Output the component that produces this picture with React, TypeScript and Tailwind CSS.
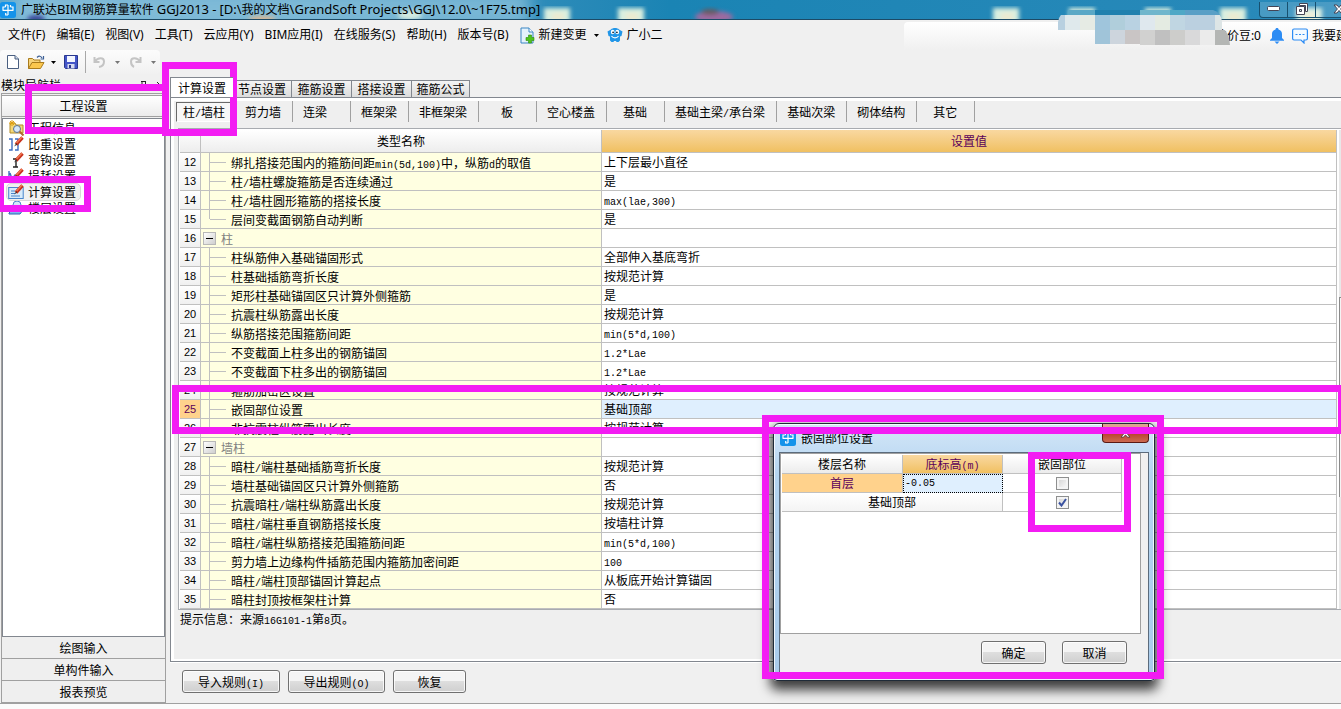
import type { ReactNode } from "react";

const UI = "font-['Noto_Sans','Noto_Sans_CJK_SC',sans-serif]";
const SONG = "font-['Noto_Sans_CJK_SC',sans-serif]";

/** Half-width characters take half the advance of a Chinese character. */
function Mixed({ text, latin = "font-['Liberation_Mono',monospace] text-[10px] leading-none" }: { text: string; latin?: string }) {
  return (
    <>
      {text.split(/([\x21-\x7e]+)/).map((part, i) =>
        i % 2 ? (
          <span key={i} className={latin}>
            {part}
          </span>
        ) : (
          part
        ),
      )}
    </>
  );
}

function AppIcon() {
  return (
    <svg width="16" height="16" viewBox="0 0 16 16" aria-hidden="true" className="shrink-0">
      <rect width="16" height="16" rx="2.5" fill="#1493ea" />
      <path
        d="M8 3v10M2.500 8.300h11M5.500 5V3H8M10.500 5V3M5.500 5H3v3M10.500 5H13v3M5.700 11v2H8"
        fill="none"
        stroke="#fff"
        strokeWidth="1.2"
      />
    </svg>
  );
}

function Caret({ color = "#000" }: { color?: string }) {
  return (
    <svg width="5" height="3" viewBox="0 0 5 3" aria-hidden="true">
      <path d="M0 0h5L2.5 3z" fill={color} />
    </svg>
  );
}

function TitleBar() {
  const spots = [544, 618, 993, 1069, 1145, 1220, 1296];
  return (
    <header className="relative flex h-5 items-center overflow-hidden border-b border-[#1c4a66] bg-linear-to-r from-[#62a9cd] via-[#1a84b4] to-[#2a8aba]">
      <svg className="absolute inset-0 h-full w-full" aria-hidden="true">
        <defs>
          <filter id="soft">
            <feGaussianBlur stdDeviation="2.2" />
          </filter>
          <filter id="haze">
            <feGaussianBlur stdDeviation="8" />
          </filter>
        </defs>
        <rect x="15" y="-10" width="515" height="40" fill="#8fc4de" opacity=".75" filter="url(#haze)" />
        <g filter="url(#soft)">
          {spots.map((x) => (
            <g key={x}>
              <rect x={x} y="8" width="26" height="16" fill="#d9efe0" />
              <rect x={x + 8} y="13" width="12" height="8" fill="#ecead0" />
            </g>
          ))}
          <ellipse cx="714" cy="17" rx="19" ry="6" fill="#9c6aa0" />
          <ellipse cx="710" cy="12" rx="9" ry="3" fill="#6a5a60" />
          <ellipse cx="36" cy="19" rx="9" ry="4" fill="#3b4a9a" />
          <ellipse cx="262" cy="19" rx="14" ry="3" fill="#e0b890" />
          <ellipse cx="410" cy="15" rx="12" ry="5" fill="#d3ebe0" />
        </g>
      </svg>
      <div className={`relative flex w-full items-center gap-[5px] text-[12px] leading-4 whitespace-pre text-black ${UI}`}>
        <AppIcon />
        <h1>
          <Mixed
            text="广联达BIM钢筋算量软件 GGJ2013 - [D:\我的文档\GrandSoft Projects\GGJ\12.0\~1F75.tmp]"
            latin="text-[13px] leading-none"
          />
        </h1>
        <div className="-mr-5 ml-auto flex h-4 self-start rounded-bl border border-t-0 border-[#17506f] bg-white/15">
          <button aria-label="最小化" className="flex w-7 items-center justify-center border-r border-[#17506f]">
            <svg width="13" height="6" viewBox="0 0 13 6">
              <rect x=".5" y=".5" width="12" height="4" rx="1" fill="#fff" stroke="#445" />
            </svg>
          </button>
          <button aria-label="还原" className="flex w-7 items-center justify-center border-r border-[#17506f]">
            <svg width="12" height="12" viewBox="0 0 12 12" fill="#fff" stroke="#445">
              <path d="M3.5.5h8v8h-2v-6h-6z" />
              <path d="M.5 3.5h8v8h-8zM3.5 6.500h2v2h-2z" fillRule="evenodd" />
            </svg>
          </button>
          <button aria-label="关闭" className="flex w-[44px] items-center pl-[17px]">
            <svg width="12" height="10" viewBox="0 0 12 10">
              <path d="M1 1h3l2 2.500L8 1h3L7.600 5 11 9H8L6 6.500 4 9H1l3.400-4z" fill="#fff" stroke="#445" />
            </svg>
          </button>
        </div>
      </div>
    </header>
  );
}

const menus = ["文件(F)", "编辑(E)", "视图(V)", "工具(T)", "云应用(Y)", "BIM应用(I)", "在线服务(S)", "帮助(H)", "版本号(B)"];

function MenuBar() {
  return (
    <nav className={`flex h-[30px] items-center pl-2 text-[12px] leading-4 whitespace-nowrap ${UI}`}>
      <div className="flex gap-[11px]">
        {menus.map((m) => (
          <button key={m}>{m}</button>
        ))}
      </div>
      <button className="ml-[11px] flex items-center gap-1">
        <svg width="15" height="17" viewBox="0 0 15 17" aria-hidden="true">
          <path d="M1 1h8l4 4v11H1z" fill="#e4f2fc" stroke="#3a86c4" />
          <path d="M9 1v4h4" fill="#fff" stroke="#3a86c4" />
          <path d="M8.500 8h3v2.500H14v3h-2.500V16h-3v-2.500H6v-3h2.500z" fill="#4fc41c" stroke="#2c8a0c" strokeWidth=".6" />
        </svg>
        新建变更
        <span className="mr-1 ml-[3px]">
          <Caret />
        </span>
      </button>
      <button className="ml-1 flex items-center gap-1">
        <svg width="16" height="16" viewBox="0 0 16 16" aria-hidden="true">
          <path d="M4 2.500C5.500.5 10.500.5 12 2.500l3.500 2L14.500 9l-1.500.5v4L11.500 15h-2l-.5-1H7l-.5 1h-2L3 13.500v-4L1.500 9l-1-4.500z" fill="#2196e8" />
          <ellipse cx="5.700" cy="5" rx="1.900" ry="2.200" fill="#fff" />
          <ellipse cx="10.300" cy="5" rx="1.900" ry="2.200" fill="#fff" />
          <circle cx="6.100" cy="5.300" r=".9" fill="#123" />
          <circle cx="9.900" cy="5.300" r=".9" fill="#123" />
          <path d="M4.500 9c1.500 2.500 5.500 2.500 7 0" fill="none" stroke="#fff" strokeWidth="1.100" />
        </svg>
        广小二
      </button>
      <div className="-mr-[19px] ml-auto flex h-7 w-[456px] items-center justify-end self-end rounded-tl bg-linear-to-b from-white to-[#f0f0f0]">
        <button>造价豆:0</button>
        <button aria-label="消息" className="ml-[9px]">
          <svg width="14" height="16" viewBox="0 0 14 16" fill="#2c8cf4">
            <path d="M7 0c1 0 1.500.6 1.500 1.400C11 2 12 4 12 6v4l2 2v.8H0V12l2-2V6c0-2 1-4 3.500-4.600C5.500.6 6 0 7 0zM4.500 13.500h5L7 16z" />
          </svg>
        </button>
        <button className="ml-2 flex items-center gap-1">
          <svg width="16" height="16" viewBox="0 0 16 16" fill="none" stroke="#2c8cf4" strokeWidth="1.200" aria-hidden="true">
            <path d="M2 1h12q1.400 0 1.400 1.400v8.200Q15.400 12 14 12h-2v3l-3-3H2Q.6 12 .6 10.600V2.400Q.6 1 2 1z" fill="#f4faff" />
            <path d="M3.500 6.500h2m1.500 0h2m1.500 0h2" />
          </svg>
          我要建议
        </button>
      </div>
    </nav>
  );
}

function Toolbar() {
  return (
    <div className="flex h-6 w-40 items-center rounded bg-linear-to-b from-[#fcfcfc] to-[#f1f1f1] pl-[7px]">
      <button aria-label="新建">
        <svg width="12" height="14" viewBox="0 0 12 14">
          <path d="M.5.5H8L11.500 4v9.500H.5z" fill="#fff" stroke="#4a5f80" />
          <path d="M8 .5V4h3.500" fill="#ccd8e8" stroke="#4a5f80" />
        </svg>
      </button>
      <button aria-label="打开" className="ml-[9px] flex items-center gap-[6px]">
        <svg width="17" height="15" viewBox="0 0 17 15">
          <path d="M.5 13.500V3.500h4l1.500 1.500h6v3" fill="#f6d37a" stroke="#a97b1c" />
          <path d="M.5 13.500 4 7.500h12l-3.500 6z" fill="#fbc74e" stroke="#a97b1c" />
          <path d="M9 2.500c2-2 4-1.500 5 .5M15.500 1v3h-3" fill="none" stroke="#3c5f96" strokeWidth="1.200" />
        </svg>
        <Caret />
      </button>
      <button aria-label="保存" className="ml-2">
        <svg width="14" height="14" viewBox="0 0 14 14">
          <path d="M.5.5h13v13h-12l-1-1z" fill="#4456c8" stroke="#28368e" />
          <rect x="3" y="1" width="8" height="6" fill="#f2f5ff" />
          <rect x="3.500" y="9" width="7" height="4.500" fill="#d5daf0" />
          <rect x="5" y="10" width="2" height="3" fill="#28368e" />
        </svg>
      </button>
      <span className="mx-[7px] h-[22px] w-px bg-[#a8a8a8]" />
      <button aria-label="撤销" className="flex items-center gap-[9px]">
        <svg width="13" height="12" viewBox="0 0 13 12" fill="none" stroke="#c4c4c4" strokeWidth="2">
          <path d="M1.500 1v5h5M2 5.500C5 1 11 1.500 11 5.500c0 3-2 5-5 5.500" />
        </svg>
        <Caret color="#777" />
      </button>
      <button aria-label="重做" className="ml-[9px] flex items-center gap-[9px]">
        <svg width="13" height="12" viewBox="0 0 13 12" fill="none" stroke="#c4c4c4" strokeWidth="2">
          <path d="M11.500 1v5h-5M11 5.500C8 1 2 1.500 2 5.500c0 3 1 4.500 3 5.500" />
        </svg>
        <Caret color="#777" />
      </button>
    </div>
  );
}

const pencil = (
  <>
    <path d="M14.500 1.500 8 8.500" stroke="#c8321e" strokeWidth="3.400" />
    <path d="M14 1 8.500 7" stroke="#f07850" strokeWidth="1.400" />
    <path d="M8.500 7 6 10.500l3-1.700z" fill="#333" />
  </>
);

const navItems: { label: string; icon: ReactNode }[] = [
  {
    label: "工程信息",
    icon: (
      <>
        <path d="M2 3h5l1 2h7v8H2z" fill="#f4d878" stroke="#b08a28" />
        <path d="M4 0v6M1 3h6M2 1l4 4M6 1 2 5" stroke="#e0a010" />
        <circle cx="9" cy="9" r="3.500" fill="#d4e8fa" stroke="#5a7090" />
        <path d="m11.500 11.500 4 4" stroke="#b06a30" strokeWidth="2" />
      </>
    ),
  },
  {
    label: "比重设置",
    icon: (
      <>
        <path d="M1 3h3v11H1M7 3h3v11H7" fill="none" stroke="#3c6cc0" strokeWidth="1.400" />
        {pencil}
      </>
    ),
  },
  {
    label: "弯钩设置",
    icon: (
      <>
        <path d="M8 6v9M5 15h5M5 7h3" fill="none" stroke="#222" strokeWidth="1.400" />
        {pencil}
      </>
    ),
  },
  {
    label: "损耗设置",
    icon: (
      <>
        <path d="M1 3v11h14M2 5l2 6 3-4 2 4 4-2" fill="none" stroke="#3c6cc0" strokeWidth="1.400" />
        {pencil}
      </>
    ),
  },
  {
    label: "计算设置",
    icon: (
      <>
        <rect x=".7" y="3.500" width="14.500" height="11" fill="#d8ebfb" stroke="#4a86cc" />
        <path d="M3 7h4M3 9.500h4M3 12h9" stroke="#4a86cc" />
        {pencil}
      </>
    ),
  },
  {
    label: "楼层设置",
    icon: (
      <>
        <path d="m1 13 3-3h11l-3 4H1zM2 9l3-3h9l-2 4" fill="#7fb6ee" stroke="#2c66b0" />
        <circle cx="9" cy="5" r="4" fill="#d4e8fa" stroke="#4a86cc" />
      </>
    ),
  },
];

function ModuleNav() {
  const bar = "flex h-[22px] shrink-0 items-center justify-center border-b border-[#a0a0a0] bg-[#efefef] hover:bg-white";
  return (
    <aside className="ml-px flex w-[165px] shrink-0 flex-col">
      <div className="flex h-[17px] items-center justify-between border-b border-[#a0a0a0] whitespace-nowrap">
        <h2 className="leading-4">模块导航栏</h2>
        <svg width="28" height="11" viewBox="0 0 28 11" stroke="#222" fill="none" aria-hidden="true">
          <path d="M3 1.500h5M4 1.500v5M7.500 1.500v5M2 6.500h7M5.500 6.500v4M19 2l7 7M26 2l-7 7" />
        </svg>
      </div>
      <div className="flex flex-1 flex-col border-x border-[#a0a0a0]">
        <button className="mt-px flex h-[22px] shrink-0 items-center justify-center border-y border-[#a0a0a0] bg-linear-to-b from-white to-[#ececec]">
          工程设置
        </button>
        <ul className="mt-px flex-1 border border-[#82878f] bg-white px-1 pt-px">
          {navItems.map((item) => (
            <li key={item.label}>
              <button
                className={
                  item.label === "计算设置"
                    ? "flex h-4 items-center gap-1 rounded-sm bg-[#f1f1f1] pr-1 pl-px outline outline-[#d8d8d8]"
                    : "flex h-4 items-center gap-1 pr-1 pl-px"
                }
              >
                <svg width="16" height="16" viewBox="0 0 16 16" fill="none" aria-hidden="true">
                  {item.icon}
                </svg>
                <span className="leading-4">{item.label}</span>
              </button>
            </li>
          ))}
        </ul>
        <button className={bar}>绘图输入</button>
        <button className={bar}>单构件输入</button>
        <button className={bar}>报表预览</button>
      </div>
    </aside>
  );
}

const tabs = ["节点设置", "箍筋设置", "搭接设置", "箍筋公式"];
const members = ["剪力墙", "连梁\u3000", "框架梁", "非框架梁", "板", "空心楼盖", "基础", "基础主梁/承台梁", "基础次梁", "砌体结构", "其它"];

type Row = { no: number; name: string; value?: string; group?: boolean; last?: boolean };
const rows: Row[] = [
  { no: 12, name: "绑扎搭接范围内的箍筋间距min(5d,100)中，纵筋d的取值", value: "上下层最小直径" },
  { no: 13, name: "柱/墙柱螺旋箍筋是否连续通过", value: "是" },
  { no: 14, name: "柱/墙柱圆形箍筋的搭接长度", value: "max(lae,300)" },
  { no: 15, name: "层间变截面钢筋自动判断", value: "是", last: true },
  { no: 16, name: "柱", group: true },
  { no: 17, name: "柱纵筋伸入基础锚固形式", value: "全部伸入基底弯折" },
  { no: 18, name: "柱基础插筋弯折长度", value: "按规范计算" },
  { no: 19, name: "矩形柱基础锚固区只计算外侧箍筋", value: "是" },
  { no: 20, name: "抗震柱纵筋露出长度", value: "按规范计算" },
  { no: 21, name: "纵筋搭接范围箍筋间距", value: "min(5*d,100)" },
  { no: 22, name: "不变截面上柱多出的钢筋锚固", value: "1.2*Lae" },
  { no: 23, name: "不变截面下柱多出的钢筋锚固", value: "1.2*Lae" },
  { no: 24, name: "箍筋加密区设置", value: "按规范计算" },
  { no: 25, name: "嵌固部位设置", value: "基础顶部" },
  { no: 26, name: "非抗震柱纵筋露出长度", value: "按规范计算", last: true },
  { no: 27, name: "墙柱", group: true },
  { no: 28, name: "暗柱/端柱基础插筋弯折长度", value: "按规范计算" },
  { no: 29, name: "墙柱基础锚固区只计算外侧箍筋", value: "否" },
  { no: 30, name: "抗震暗柱/端柱纵筋露出长度", value: "按规范计算" },
  { no: 31, name: "暗柱/端柱垂直钢筋搭接长度", value: "按墙柱计算" },
  { no: 32, name: "暗柱/端柱纵筋搭接范围箍筋间距", value: "min(5*d,100)" },
  { no: 33, name: "剪力墙上边缘构件插筋范围内箍筋加密间距", value: "100" },
  { no: 34, name: "暗柱/端柱顶部锚固计算起点", value: "从板底开始计算锚固" },
  { no: 35, name: "暗柱封顶按框架柱计算", value: "否" },
];

function SettingsTable() {
  const line = "border-[#c0c0c0]";
  return (
    <table className="w-full table-fixed border-separate border-spacing-0 text-left leading-[18px]">
      <thead>
        <tr className="h-[23px] text-center">
          <th aria-label="序号" className={`w-[21px] border-r border-b ${line} bg-linear-to-b from-white to-[#ededed]`} />
          <th className={`w-[401px] border-r border-b ${line} bg-linear-to-b from-white to-[#ededed] font-normal`}>类型名称</th>
          <th className={`border-r border-b ${line} bg-linear-to-b from-[#f9d8a0] to-[#f0c060] font-normal text-[#5a005a]`}>设置值</th>
        </tr>
      </thead>
      <tbody>
        {rows.map((r) => {
          const current = r.no === 25;
          return (
            <tr key={r.no} className="h-[19px] whitespace-nowrap">
              <th
                scope="row"
                className={`border-r border-b p-0 ${line} text-center font-['Liberation_Sans',sans-serif] text-[11px] leading-4 font-normal ${
                  current ? "bg-[#ffd28c] text-[#5a005a]" : "bg-linear-to-b from-white to-[#f0f0f0]"
                }`}
              >
                {r.no}
              </th>
              <td className={`border-r border-b ${line} bg-[#ffffe1]`}>
                {r.group ? (
                  <div className="flex h-[18px] items-center gap-[5px] pl-[2px] text-[#808080]">
                    <button
                      aria-label={`折叠${r.name}`}
                      className="flex size-[13px] items-center justify-center border border-[#b8b8b8] bg-linear-to-br from-white to-[#cfcfcf]"
                    >
                      <span className="h-px w-[7px] bg-black" />
                    </button>
                    <span className="pt-px leading-[17px]">{r.name}</span>
                  </div>
                ) : (
                  <div className="flex h-[18px] items-center pl-2">
                    <span className={`w-px self-start bg-[#c0c0c0] ${r.last ? "h-[9px]" : "h-full"}`} />
                    <span className="mr-[5px] h-px w-4 bg-[#c0c0c0]" />
                    <span className="pt-px leading-[17px]">
                      <Mixed text={r.name} />
                    </span>
                  </div>
                )}
              </td>
              <td className={`border-r border-b ${line} ${current ? "bg-[#dfeffe]" : "bg-white"}`}>
                <div className="h-[18px] pl-[2px] leading-[17px]">
                  <Mixed text={r.value ?? ""} />
                </div>
              </td>
            </tr>
          );
        })}
      </tbody>
    </table>
  );
}

function PushButton({ children, size }: { children: string; size: string }) {
  return (
    <button
      className={`h-[23px] rounded-[3px] border border-[#707070] bg-linear-to-b from-[#f4f4f4] from-50% via-[#dedede] via-50% to-[#cfcfcf] leading-5 inset-ring inset-ring-white/80 ${size}`}
    >
      <Mixed text={children} />
    </button>
  );
}

function Workspace() {
  return (
    <main className="ml-1 flex min-w-0 flex-1 flex-col">
      <div className="flex h-[20px] items-end whitespace-nowrap">
        <button className="z-10 h-full w-[63px] self-stretch border-t border-l border-[#82878f] bg-white leading-5">计算设置</button>
        {tabs.map((t) => (
          <button
            key={t}
            className="h-[17px] w-[59px] border-t border-r border-[#82878f] bg-linear-to-b from-[#f4f4f4] to-[#dcdcdc] leading-4 last:w-[58px] nth-[3]:w-[60px] nth-[4]:w-[60px]"
          >
            {t}
          </button>
        ))}
      </div>
      <section className="flex flex-1 flex-col border-y border-l border-[#82878f] bg-[#efefef]">
        <div className="flex flex-1 flex-col border-t-[3px] border-b-2 border-l-[3px] border-white pl-[4px]">
          <div className="flex h-[27px] items-start whitespace-pre">
            <button className="mt-px mr-[3px] -ml-[2px] h-5 w-[56px] border border-[#fff] border-t-[#696969] border-l-[#696969] bg-[#f7f7f7] leading-[18px]">
              <Mixed text="柱/墙柱" />
            </button>
            {members.map((m) => (
              <button key={m} className="h-[21px] min-w-[58px] border-r border-[#a0a0a0] pr-[11px] pl-[10px] leading-5">
                <Mixed text={m} />
              </button>
            ))}
          </div>
          <div className="flex border-y border-l border-[#a8abb0] bg-white pt-px pl-px">
            <div className="min-w-0 flex-1">
              <SettingsTable />
            </div>
            <div className="ml-[2px] flex w-[2px] flex-col bg-[#e8e8e8]">
              <span className="mt-[167px] h-[200px] border-t border-l border-[#8a8a8a] bg-[#f4f4f4]" />
            </div>
          </div>
          <p className="pl-[2px] leading-[18px]">
            <Mixed text="提示信息：来源16G101-1第8页。" />
          </p>
        </div>
      </section>
      <div className="flex h-[41px] items-center gap-2 border-t border-white pb-[3px] pl-3">
        <PushButton size="w-[98px]">导入规则(I)</PushButton>
        <PushButton size="w-[97px]">导出规则(O)</PushButton>
        <PushButton size="w-[73px]">恢复</PushButton>
      </div>
    </main>
  );
}

function FixedPartDialog() {
  const cell = "border-r border-b border-[#c0c0c0]";
  const head = "bg-linear-to-b from-white to-[#ececec] font-normal";
  return (
    <div
      role="dialog"
      aria-labelledby="dlg-title"
      className="absolute top-[423px] left-[773px] flex h-[258px] w-[382px] flex-col rounded-t-md rounded-b-sm border border-[#1f2b38] bg-linear-to-b from-[#d4e7f8] via-[#b4d4f0] via-20% to-[#a9cbeb] px-[5px] pb-1 shadow-[0_6px_12px_3px_rgba(0,0,0,0.75)] inset-ring inset-ring-white/80"
    >
      <div className="flex h-7 shrink-0 items-center">
        <span className="mr-[5px] ml-px">
          <AppIcon />
        </span>
        <h2 id="dlg-title" className="leading-4">
          嵌固部位设置
        </h2>
        <button
          aria-label="关闭"
          className="ml-auto flex h-[19px] w-[47px] items-center justify-center self-start rounded-b border border-t-0 border-[#5a1a14] bg-linear-to-b from-[#e0a090] from-40% via-[#b8402c] via-50% to-[#cc6a50]"
        >
          <svg width="11" height="9" viewBox="0 0 12 10">
            <path d="M1 1h3l2 2.500L8 1h3L7.600 5 11 9H8L6 6.500 4 9H1l3.400-4z" fill="#fff" stroke="#544" />
          </svg>
        </button>
      </div>
      <div className="flex flex-1 flex-col border border-[#5b6b7c] bg-[#f0f0f0] pr-[7px]">
        <div className="h-[181px] border border-[#a0a0a0] bg-white pt-px pl-px">
          <table className="w-[340px] table-fixed border-separate border-spacing-0 text-center leading-[18px]">
            <thead>
              <tr className="h-[19px]">
                <th className={`${cell} ${head} w-[121px]`}>楼层名称</th>
                <th className={`${cell} w-[100px] bg-linear-to-b from-[#f9d8a0] to-[#f0c060] font-normal text-[#5a005a]`}>
                  <Mixed text="底标高(m)" />
                </th>
                <th className={`${cell} ${head}`}>嵌固部位</th>
              </tr>
            </thead>
            <tbody>
              <tr className="h-[19px]">
                <td className={`${cell} bg-[#ffd28c] text-[#5a005a]`}>首层</td>
                <td className="p-0">
                  <input
                    aria-label="底标高"
                    defaultValue="-0.05"
                    className="block h-[19px] w-full border border-dotted border-black bg-[#dfeffe] px-px font-['Liberation_Mono',monospace] text-[10px]"
                  />
                </td>
                <td className={cell}>
                  <CheckBox label="首层嵌固" />
                </td>
              </tr>
              <tr className="h-[19px]">
                <td colSpan={2} className={`${cell} bg-linear-to-b from-white to-[#f4f4f4]`}>
                  基础顶部
                </td>
                <td className={cell}>
                  <CheckBox label="基础顶部嵌固" checked />
                </td>
              </tr>
            </tbody>
          </table>
        </div>
        <div className="flex justify-end gap-4 pt-[7px] pr-[14px]">
          <PushButton size="w-[65px]">确定</PushButton>
          <PushButton size="w-[65px]">取消</PushButton>
        </div>
      </div>
    </div>
  );
}

function CheckBox({ label, checked = false }: { label: string; checked?: boolean }) {
  return (
    <span className="mx-auto grid size-[13px] place-items-center">
      <input
        type="checkbox"
        aria-label={label}
        defaultChecked={checked}
        className="peer col-start-1 row-start-1 size-[13px] appearance-none border border-[#8e8f8f] bg-linear-to-br from-[#d0d0d0] to-white inset-ring-2 inset-ring-[#f4f4f4]"
      />
      <svg width="9" height="9" viewBox="0 0 9 9" className="pointer-events-none z-10 col-start-1 row-start-1 hidden peer-checked:block">
        <path d="M1 4.500 3.500 7.500 8 1" fill="none" stroke="#3a52a0" strokeWidth="2" />
      </svg>
    </span>
  );
}

const mosaic: [number, number, number, number, string][] = [
  [10, 1, 27, 5, "#5aa8c6"],
  [37, 1, 45, 5, "#1f80ae"],
  [82, 0, 30, 6, "#70b6cc"],
  [112, 0, 15, 6, "#4fa8c6"],
  [127, 1, 36, 5, "#5a9fc6"],
  [0, 6, 7, 15, "#b8d0e0"],
  [7, 6, 15, 15, "#dfe9ec"],
  [22, 6, 15, 15, "#e6ebe4"],
  [37, 6, 15, 15, "#9fc5dc"],
  [52, 6, 15, 15, "#b0cedb"],
  [67, 6, 15, 15, "#b9d2e2"],
  [82, 6, 15, 15, "#dfe8ee"],
  [97, 6, 15, 15, "#e4ebe2"],
  [112, 6, 15, 15, "#c0d6e2"],
  [127, 6, 30, 15, "#bbd0e0"],
  [157, 6, 7, 15, "#dde5e6"],
  [37, 21, 15, 14, "#a0c4d9"],
  [52, 21, 15, 14, "#cdd5dd"],
  [67, 21, 15, 14, "#c9c5c5"],
  [82, 21, 15, 15, "#d1d1d0"],
  [97, 21, 15, 15, "#c0c0c0"],
  [112, 21, 15, 15, "#cdcdcb"],
  [127, 21, 15, 15, "#d9d9da"],
  [142, 21, 15, 15, "#ebebeb"],
];

function Mosaic() {
  return (
    <svg width="173" height="37" viewBox="0 0 173 37" shapeRendering="crispEdges" className="absolute top-[9px] right-[110px]" aria-hidden="true">
      <clipPath id="blob">
        <path d="M10 1H155q8 2 9 12v6q7 3 8 17H37V21H0v-8Q2 3 10 1z" />
      </clipPath>
      <g clipPath="url(#blob)">
        {mosaic.map(([x, y, w, h, c]) => (
          <rect key={`${x}-${y}`} x={x} y={y} width={w} height={h} fill={c} />
        ))}
        <rect x="157" y="21" width="15" height="15" fill="#b4b6b4" />
      </g>
    </svg>
  );
}

function Highlights() {
  const box = "pointer-events-none absolute border-[7px] border-[#f31cf3]";
  return (
    <div aria-hidden="true">
      <div className={`${box} top-[84px] left-[25px] h-[50px] w-[144px]`} />
      <div className={`${box} top-[62px] left-[162px] h-[74px] w-[75px]`} />
      <div className={`${box} top-[176px] -left-[3px] h-9 w-[94px]`} />
      <div className={`${box} top-[385px] -right-1 left-[172px] h-[49px]`} />
      <div className={`${box} top-[415px] left-[762px] h-[264px] w-[402px]`} />
      <div className={`${box} top-[452px] left-[1028px] h-20 w-[103px]`} />
    </div>
  );
}

export default function App() {
  return (
    <div className={`relative flex min-h-screen flex-col overflow-hidden bg-[#f0f0f0] text-[12px] text-black ${SONG}`}>
      <TitleBar />
      <MenuBar />
      <Toolbar />
      <div className="mt-[3px] flex flex-1 border-b border-[#a0a0a0]">
        <ModuleNav />
        <Workspace />
      </div>
      <div className="h-[5px] bg-[#fbfbfb]" />
      <Mosaic />
      <FixedPartDialog />
      <Highlights />
    </div>
  );
}
